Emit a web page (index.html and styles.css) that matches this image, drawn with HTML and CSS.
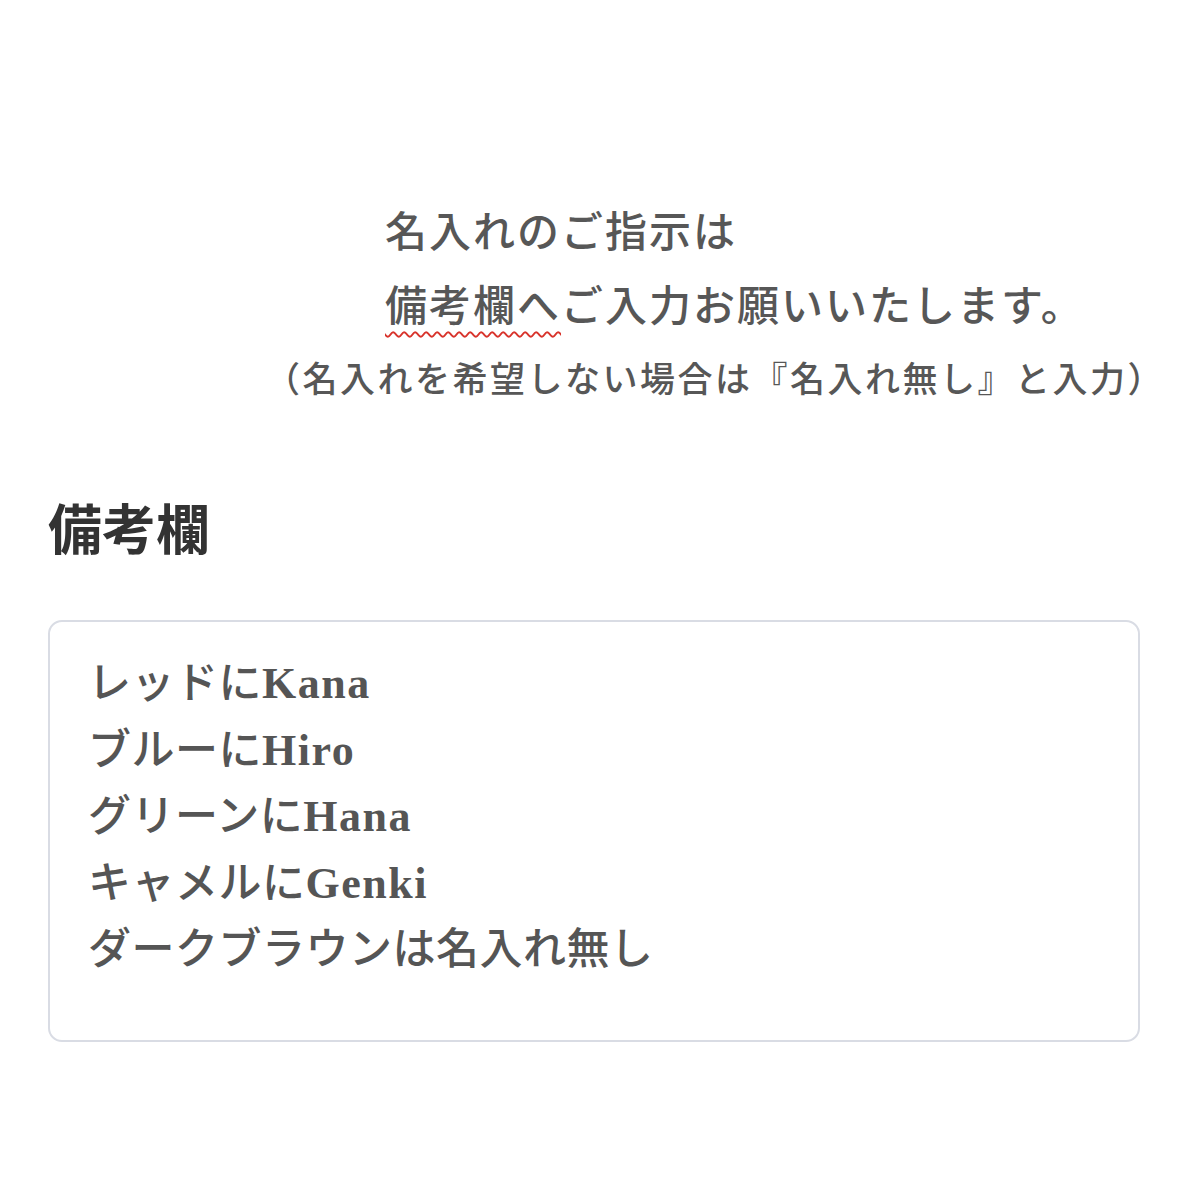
FILE: index.html
```html
<!DOCTYPE html>
<html lang="ja">

<head>
    <meta charset="UTF-8">
    <meta name="viewport" content="width=device-width, initial-scale=1.0">
    <title>備考欄</title>

    <link rel="stylesheet" href="styles.css">
</head>

<body>
    <div class="notice">
        <p class="notice-line">名入れのご指示は</p>
        <p class="notice-line"><span class="spell">備考欄へ</span>ご入力お願いいたします。</p>
        <p class="notice-sub">（名入れを希望しない場合は『名入れ無し』と入力）</p>
    </div>

    <div class="memo">
        <h2 class="memo-title">備考欄</h2>
        <div class="memo-box">
            <p class="memo-line">レッドに<span class="name">Kana</span></p>
            <p class="memo-line">ブルーに<span class="name">Hiro</span></p>
            <p class="memo-line">グリーンに<span class="name">Hana</span></p>
            <p class="memo-line">キャメルに<span class="name">Genki</span></p>
            <p class="memo-line">ダークブラウンは名入れ無し</p>
        </div>
    </div>
</body>

</html>
```

FILE: styles.css
```css
* {
    margin: 0;
    padding: 0;
    box-sizing: border-box;
}

body {
    background-color: #fff;
    font-family: "Liberation Serif", "Noto Sans CJK JP", serif;
    color: #575757;
    text-spacing-trim: space-all;
}

.notice {
    padding-top: 196px;
}

.notice-line {
    margin-left: 385px;
    font-size: 42px;
    line-height: 74px;
    font-weight: 500;
    letter-spacing: 2px;
    white-space: nowrap;
}

/* spell-check squiggle under the first word */
.spell {
    text-decoration-line: underline;
    text-decoration-style: wavy;
    text-decoration-color: #d8332b;
    text-decoration-thickness: 1.5px;
    text-underline-offset: 10px;
}

.notice-sub {
    margin-left: 265px;
    font-size: 35px;
    line-height: 74px;
    font-weight: 500;
    letter-spacing: 2.5px;
    white-space: nowrap;
}

.memo {
    padding: 74px 60px 0 48px;
}

.memo-title {
    font-family: "Noto Sans CJK JP", sans-serif;
    font-size: 54px;
    line-height: 70px;
    font-weight: 700;
    color: #333;
}

.memo-box {
    margin-top: 58px;
    width: 1092px;
    height: 422px;
    padding: 29px 38px;
    border: 2px solid #d9dce4;
    border-radius: 14px;
}

.memo-line {
    font-size: 43px;
    line-height: 66.5px;
    font-weight: 500;
    letter-spacing: 0.5px;
    color: #555;
    white-space: nowrap;
}

.name {
    font-weight: 700;
    font-size: 44px;
    letter-spacing: 1.5px;
}
```
